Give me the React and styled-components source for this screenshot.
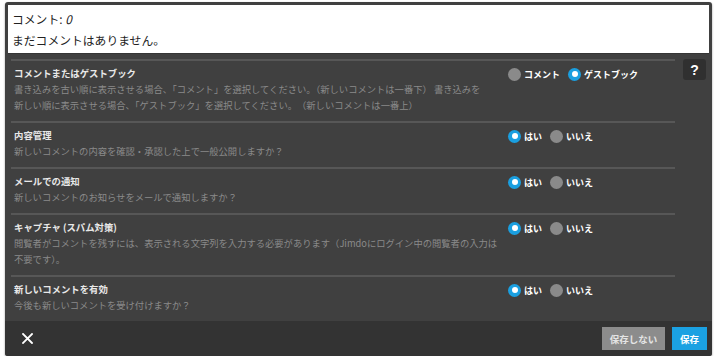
import React from "react";
import styled, { createGlobalStyle } from "styled-components";

const Global = createGlobalStyle`
  html, body { margin: 0; padding: 0; background: #ffffff; }
  body { font-family: "Noto Sans CJK JP", "Noto Sans", sans-serif; }
  * { box-sizing: border-box; }
`;

const Frame = styled.div`
  margin: 2px 0 0 5px;
  width: 707px;
  background: #404040;
  border-radius: 3px;
  padding: 3px 3px 0 3px;
  box-shadow: 0 1px 2px rgba(0, 0, 0, 0.45);
  overflow: hidden;
`;

const Preview = styled.div`
  background: #ffffff;
  color: #222;
  font-size: 11.8px;
  line-height: 21px;
  padding: 3px 4px 3px;
  border-bottom: 1px solid #353535;
`;

const Line = styled.div``;

const Panel = styled.div`
  display: flex;
  align-items: flex-start;
  padding: 5px 3px 0 3px;
  gap: 8px;
`;

const Rows = styled.div`
  width: 665px;
  display: flex;
  flex-direction: column;
`;

const Row = styled.div`
  display: grid;
  grid-template-columns: 480px 1fr;
  column-gap: 14px;
  border-top: 2px solid #575757;
  padding: 4px 0 8px 3px;
`;

const Texts = styled.div`
  min-width: 0;
`;

const Title = styled.div`
  font-size: 9.4px;
  line-height: 16px;
  font-weight: 700;
  color: #e8e8e8;
`;

const Desc = styled.div`
  font-size: 9.3px;
  line-height: 16px;
  color: #8a8a8a;
  white-space: nowrap;
`;

const Options = styled.div`
  display: flex;
  align-items: center;
  gap: 8px;
  padding-top: 2px;
  height: 16px;
`;

const Option = styled.div`
  display: flex;
  align-items: center;
  gap: 3px;
  font-size: 9px;
  font-weight: 700;
  color: #ffffff;
`;

const Dot = styled.span`
  width: 13px;
  height: 13px;
  border-radius: 50%;
  background: ${(p) => (p.$on ? "#1a9fe0" : "#8a8a8a")};
  display: inline-flex;
  align-items: center;
  justify-content: center;
  &::after {
    content: "";
    width: 6px;
    height: 6px;
    border-radius: 50%;
    background: #ffffff;
    display: ${(p) => (p.$on ? "block" : "none")};
  }
`;

const Help = styled.div`
  width: 23px;
  height: 21px;
  border-radius: 3px;
  background: #303030;
  color: #ffffff;
  font-family: "Liberation Sans", Arial, sans-serif;
  font-weight: 700;
  font-size: 14px;
  display: flex;
  align-items: center;
  justify-content: center;
`;

const Footer = styled.div`
  margin: 0 -3px;
  height: 35px;
  background: #333333;
  display: flex;
  align-items: center;
  justify-content: space-between;
  padding: 0 5px 0 16px;
`;

const Close = styled.div`
  width: 12px;
  height: 12px;
  display: flex;
  align-items: center;
  justify-content: center;
`;

const Buttons = styled.div`
  display: flex;
  gap: 7px;
`;

const Button = styled.div`
  height: 23px;
  width: ${(p) => (p.$primary ? "35px" : "63px")};
  display: flex;
  align-items: center;
  justify-content: center;
  background: ${(p) => (p.$primary ? "#1ba1e2" : "#8c8c8c")};
  color: ${(p) => (p.$primary ? "#ffffff" : "#e4e4e4")};
  font-size: 9.5px;
  font-weight: 700;
`;

const Radio = ({ on, label }) => (
  <Option>
    <Dot $on={on} />
    {label}
  </Option>
);

const settings = [
  {
    title: "コメントまたはゲストブック",
    desc: [
      "書き込みを古い順に表示させる場合、「コメント」を選択してください。（新しいコメントは一番下） 書き込みを",
      "新しい順に表示させる場合、「ゲストブック」を選択してください。　（新しいコメントは一番上）",
    ],
    options: [
      ["コメント", false],
      ["ゲストブック", true],
    ],
  },
  {
    title: "内容管理",
    desc: ["新しいコメントの内容を確認・承認した上で一般公開しますか？"],
    options: [
      ["はい", true],
      ["いいえ", false],
    ],
  },
  {
    title: "メールでの通知",
    desc: ["新しいコメントのお知らせをメールで通知しますか？"],
    options: [
      ["はい", true],
      ["いいえ", false],
    ],
  },
  {
    title: "キャプチャ (スパム対策)",
    desc: [
      "閲覧者がコメントを残すには、表示される文字列を入力する必要があります（Jimdoにログイン中の閲覧者の入力は",
      "不要です）。",
    ],
    options: [
      ["はい", true],
      ["いいえ", false],
    ],
  },
  {
    title: "新しいコメントを有効",
    desc: ["今後も新しいコメントを受け付けますか？"],
    options: [
      ["はい", true],
      ["いいえ", false],
    ],
  },
];

export default function App() {
  return (
    <>
      <Global />
      <Frame>
        <Preview>
          <Line>
            コメント: <em>0</em>
          </Line>
          <Line>まだコメントはありません。</Line>
        </Preview>
        <Panel>
          <Rows>
            {settings.map((s) => (
              <Row key={s.title}>
                <Texts>
                  <Title>{s.title}</Title>
                  {s.desc.map((d) => (
                    <Desc key={d}>{d}</Desc>
                  ))}
                </Texts>
                <Options>
                  {s.options.map(([l, on]) => (
                    <Radio key={l} label={l} on={on} />
                  ))}
                </Options>
              </Row>
            ))}
          </Rows>
          <Help>?</Help>
        </Panel>
        <Footer>
          <Close>
            <svg width="11" height="11" viewBox="0 0 11 11">
              <path d="M1 1 L10 10 M10 1 L1 10" stroke="#ffffff" strokeWidth="1.8" strokeLinecap="square" />
            </svg>
          </Close>
          <Buttons>
            <Button>保存しない</Button>
            <Button $primary>保存</Button>
          </Buttons>
        </Footer>
      </Frame>
    </>
  );
}
